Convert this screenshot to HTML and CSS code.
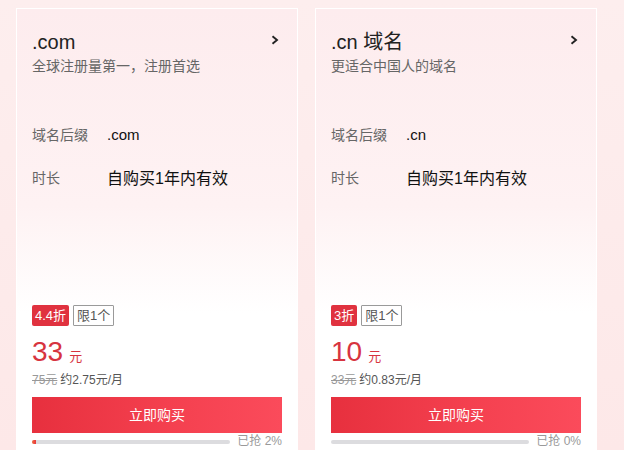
FILE: index.html
```html
<!DOCTYPE html>
<html lang="zh-CN">
<head>
<meta charset="utf-8">
<title>域名</title>
<link rel="stylesheet" href="styles.css">
</head>
<body>
<div class="page">
  <div class="card">
    <div class="head">
      <span class="title">.com</span>
      <svg class="chev" width="8" height="10" viewBox="0 0 8 10"><path d="M1.5 1.2 L6 5 L1.5 8.8" fill="none" stroke="#222" stroke-width="1.9"/></svg>
    </div>
    <div class="sub">全球注册量第一，注册首选</div>
    <div class="row first"><span class="lab">域名后缀</span><span class="val small">.com</span></div>
    <div class="row"><span class="lab">时长</span><span class="val">自购买1年内有效</span></div>
    <div class="badges"><span class="disc">4.4折</span><span class="limit">限1个</span></div>
    <div class="price">33<span class="unit">元</span></div>
    <div class="old"><s>75元</s> <span class="month">约2.75元/月</span></div>
    <div class="btn">立即购买</div>
    <div class="prog">
      <div class="track"><div class="fill" style="width:2%"></div></div>
      <span class="ptxt">已抢 2%</span>
    </div>
  </div>
  <div class="card">
    <div class="head">
      <span class="title">.cn 域名</span>
      <svg class="chev" width="8" height="10" viewBox="0 0 8 10"><path d="M1.5 1.2 L6 5 L1.5 8.8" fill="none" stroke="#222" stroke-width="1.9"/></svg>
    </div>
    <div class="sub">更适合中国人的域名</div>
    <div class="row first"><span class="lab">域名后缀</span><span class="val small">.cn</span></div>
    <div class="row"><span class="lab">时长</span><span class="val">自购买1年内有效</span></div>
    <div class="badges"><span class="disc">3折</span><span class="limit">限1个</span></div>
    <div class="price">10<span class="unit">元</span></div>
    <div class="old"><s>33元</s> <span class="month">约0.83元/月</span></div>
    <div class="btn">立即购买</div>
    <div class="prog">
      <div class="track"><div class="fill" style="width:0%"></div></div>
      <span class="ptxt">已抢 0%</span>
    </div>
  </div>
</div>
</body>
</html>
```
FILE: styles.css
```css
html, body {
  margin: 0;
  height: 100%;
  overflow: hidden;
}
body {
  font-family: "Liberation Sans", "Noto Sans CJK SC", sans-serif;
  background: linear-gradient(180deg, #fdeeee 0%, #fde8e8 100%);
  color: #222;
}
.page {
  display: flex;
  gap: 17px;
  padding: 8px 0 0 16px;
}
.card {
  width: 250px;
  flex: none;
  height: 470px;
  border: 1px solid #fff;
  padding: 21px 15px 0 15px;
  background: linear-gradient(180deg, #fdecee 0%, #fef2f3 40%, #ffffff 62%, #ffffff 100%);
  display: flex;
  flex-direction: column;
}
.head {
  display: flex;
  justify-content: space-between;
  align-items: center;
  height: 24px;
}
.title {
  font-size: 20px;
  line-height: 24px;
  color: #222;
}
.chev {
  margin-right: 3px;
  margin-top: -5px;
}
.sub {
  margin-top: 2px;
  font-size: 14px;
  line-height: 20px;
  color: #666;
}
.row {
  display: flex;
  align-items: center;
  height: 20px;
  margin-top: 23px;
}
.row.first {
  margin-top: 48px;
}
.lab {
  width: 75px;
  flex: none;
  font-size: 14px;
  color: #666;
}
.val {
  font-size: 16px;
  color: #111;
}
.val.small {
  font-size: 15px;
}
.badges {
  margin-top: 118px;
  display: flex;
  gap: 4px;
  height: 21px;
  align-items: flex-start;
}
.disc {
  height: 21px;
  line-height: 21px;
  padding: 0 3px;
  background: #e0323f;
  color: #fff;
  font-size: 13px;
  border-radius: 2px;
}
.limit {
  height: 19px;
  line-height: 19px;
  padding: 0 3px;
  border: 1px solid #9a9a9a;
  color: #555;
  font-size: 13px;
  border-radius: 1px;
}
.price {
  margin-top: 10px;
  height: 32px;
  font-size: 28px;
  line-height: 32px;
  color: #d7343f;
  display: flex;
  align-items: baseline;
}
.unit {
  font-size: 13px;
  line-height: 1;
  margin-left: 6px;
}
.old {
  margin-top: 4px;
  height: 16px;
  font-size: 12px;
  line-height: 16px;
  color: #555;
  display: flex;
  align-items: center;
  gap: 3px;
}
.old s {
  color: #999;
}
.btn {
  margin-top: 9px;
  height: 36px;
  line-height: 36px;
  text-align: center;
  color: #fff;
  font-size: 14px;
  background: linear-gradient(90deg, #e7303e 0%, #f4404f 55%, #fb4b5b 100%);
}
.prog {
  display: flex;
  align-items: center;
  justify-content: space-between;
  height: 16px;
}
.track {
  width: 198px;
  height: 4px;
  background: #dcdcdf;
  border-radius: 2px;
  overflow: hidden;
  margin-top: 1px;
}
.fill {
  height: 100%;
  background: linear-gradient(90deg, #f06a3a, #e8363f);
}
.ptxt {
  font-size: 12px;
  line-height: 16px;
  color: #999;
}
```
